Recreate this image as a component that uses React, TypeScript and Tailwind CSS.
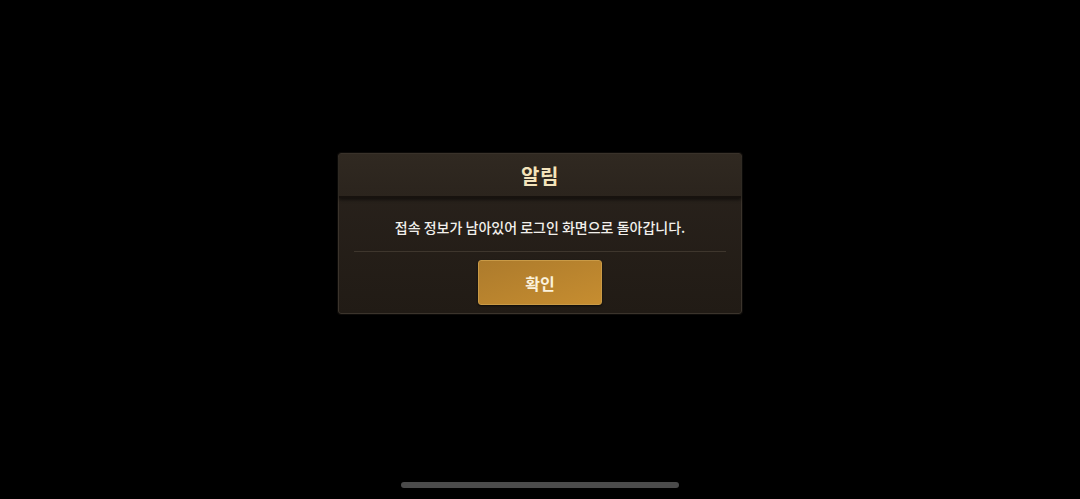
import React from "react";

export default function App() {
  return (
    <div
      className="relative w-full h-[499px] bg-black flex flex-col items-center pt-[153px] overflow-hidden"
      style={{ fontFamily: '"Noto Sans CJK KR", "Noto Sans", sans-serif' }}
    >
      <div className="w-[404px] h-[161px] rounded-[3px] border border-[#3b342c] bg-gradient-to-b from-[#2a231d] to-[#211b15] flex flex-col shadow-[0_0_0_1px_#0d0b09]">
        <div className="h-[44px] flex items-center justify-center pt-[1px] bg-gradient-to-b from-[#302921] to-[#2b241d] border-b-2 border-[#17120e] shadow-[0_2px_3px_rgba(0,0,0,0.5)]">
          <span className="text-[20px] font-bold text-[#f4e4bb] leading-none tracking-[0.5px]">알림</span>
        </div>
        <div className="h-[53px] flex items-center justify-center pt-[5px]">
          <span className="text-[14px] font-medium text-[#f2f0ec] leading-none">
            접속 정보가 남아있어 로그인 화면으로 돌아갑니다.
          </span>
        </div>
        <div className="mx-[15px] h-px bg-[#3e362d]" />
        <div className="flex-1 flex items-start justify-center pt-[8px]">
          <button className="w-[124px] h-[45px] rounded-[3px] border border-[#c99a46] bg-gradient-to-br from-[#ad7b2c] to-[#c68d30] flex items-center justify-center shadow-[0_1px_2px_rgba(0,0,0,0.6)]">
            <span className="text-[16px] font-bold text-[#fbf2dc] leading-none">확인</span>
          </button>
        </div>
      </div>
      <div className="absolute left-[401px] top-[482px] w-[278px] h-[6px] rounded-full bg-[#4b4b4b]" />
    </div>
  );
}
